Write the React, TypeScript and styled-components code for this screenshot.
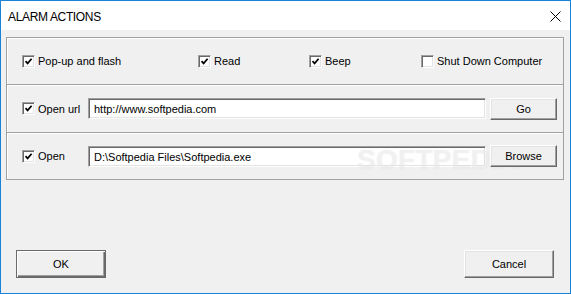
import React from 'react';
import styled, { createGlobalStyle } from 'styled-components';

const GlobalStyle = createGlobalStyle`
  html, body {
    margin: 0;
    padding: 0;
    background: #ffffff;
  }
  body {
    font-family: "Liberation Sans", Arial, sans-serif;
    font-size: 11px;
    color: #000;
  }
`;

const Window = styled.div`
  width: 571px;
  height: 294px;
  box-sizing: border-box;
  border: 1px solid #1883d7;
  display: flex;
  flex-direction: column;
  background: #f0f0f0;
  position: relative;
  overflow: hidden;
`;

const TitleBar = styled.div`
  height: 29px;
  flex: none;
  background: #ffffff;
  display: flex;
  align-items: center;
  justify-content: space-between;
  padding-left: 7px;
`;

const Title = styled.span`
  font-size: 12px;
  letter-spacing: -0.35px;
  color: #000;
  padding-top: 2px;
`;

const CloseButton = styled.div`
  width: 30px;
  height: 29px;
  display: flex;
  align-items: center;
  justify-content: center;
  padding-top: 2px;
`;

const Body = styled.div`
  flex: 1;
  display: flex;
  flex-direction: column;
  padding: 7px 6px 15px 5px;
`;

const GroupPanel = styled.div`
  border: 1px solid #a0a0a0;
  box-shadow: inset 1px 1px 0 #ffffff;
  display: flex;
  flex-direction: column;
`;

const Row = styled.div<{ $height: number; $last?: boolean }>`
  height: ${(p) => p.$height}px;
  display: flex;
  align-items: center;
  padding: 0 5px 0 15px;
  border-bottom: ${(p) => (p.$last ? 'none' : '1px solid #a0a0a0')};
  box-shadow: ${(p) => (p.$last ? 'none' : '0 1px 0 #ffffff')};
`;

const OptionGrid = styled.div`
  display: grid;
  grid-template-columns: 176px 111px 112px 1fr;
  align-items: center;
  width: 100%;
`;

const CheckLabel = styled.label<{ $width?: number }>`
  display: flex;
  align-items: center;
  gap: 3px;
  width: ${(p) => (p.$width ? `${p.$width}px` : 'auto')};
  flex: none;
  white-space: nowrap;
`;

const Box = styled.span`
  width: 13px;
  height: 13px;
  box-sizing: border-box;
  background: #ffffff;
  border-top: 1px solid #a0a0a0;
  border-left: 1px solid #a0a0a0;
  border-right: 1px solid #ffffff;
  border-bottom: 1px solid #ffffff;
  box-shadow: inset 1px 1px 0 #696969, inset -1px -1px 0 #e3e3e3;
  display: flex;
  align-items: center;
  justify-content: center;
`;

const TextField = styled.div`
  width: 398px;
  height: 21px;
  box-sizing: border-box;
  background: #ffffff;
  border-top: 1px solid #a0a0a0;
  border-left: 1px solid #a0a0a0;
  border-right: 1px solid #ffffff;
  border-bottom: 1px solid #ffffff;
  box-shadow: inset 1px 1px 0 #696969, inset -1px -1px 0 #e3e3e3;
  display: flex;
  align-items: center;
  padding-left: 5px;
  padding-top: 1px;
  flex: none;
`;

const PushButton = styled.div<{ $width: number; $height: number; $default?: boolean }>`
  width: ${(p) => p.$width}px;
  height: ${(p) => p.$height}px;
  box-sizing: border-box;
  background: #f0f0f0;
  border-top: 1px solid ${(p) => (p.$default ? '#696969' : '#ffffff')};
  border-left: 1px solid ${(p) => (p.$default ? '#696969' : '#ffffff')};
  border-right: 1px solid #696969;
  border-bottom: 1px solid #696969;
  box-shadow: ${(p) =>
    p.$default
      ? 'inset 1px 1px 0 #ffffff, inset -1px -1px 0 #696969, inset -2px -2px 0 #a0a0a0'
      : 'inset -1px -1px 0 #a0a0a0, inset 1px 1px 0 #e3e3e3'};
  display: flex;
  align-items: center;
  justify-content: center;
  flex: none;
  position: relative;
  z-index: 1;
`;

const Spacer = styled.div<{ $width: number }>`
  width: ${(p) => p.$width}px;
  flex: none;
`;

const Footer = styled.div`
  margin-top: auto;
  display: flex;
  justify-content: space-between;
  padding: 0 10px 0 10px;
`;

const Watermark = styled.div`
  position: absolute;
  left: 356px;
  top: 143px;
  font-family: "Liberation Sans", Arial, sans-serif;
  font-weight: bold;
  font-size: 28px;
  letter-spacing: 0.3px;
  color: rgba(255, 255, 255, 0.5);
  text-shadow: 0 0 1px rgba(160, 160, 160, 0.3);
  pointer-events: none;
`;

const Check = () => (
  <svg width="9" height="9" viewBox="0 0 9 9">
    <path d="M1.5 4.2 L3.6 6.4 L7.6 1.8" fill="none" stroke="#000" strokeWidth="1.7" />
  </svg>
);

const Checkbox = ({ checked, label, width }: { checked: boolean; label: string; width?: number }) => (
  <CheckLabel $width={width}>
    <Box>{checked && <Check />}</Box>
    {label}
  </CheckLabel>
);

export default function App() {
  return (
    <>
      <GlobalStyle />
      <Window>
        <TitleBar>
          <Title>ALARM ACTIONS</Title>
          <CloseButton>
            <svg width="11" height="11" viewBox="0 0 11 11">
              <path d="M0.5 0.5 L10.5 10.5 M10.5 0.5 L0.5 10.5" stroke="#000" strokeWidth="1" />
            </svg>
          </CloseButton>
        </TitleBar>
        <Body>
          <GroupPanel>
            <Row $height={46}>
              <OptionGrid>
                <Checkbox checked label="Pop-up and flash" />
                <Checkbox checked label="Read" />
                <Checkbox checked label="Beep" />
                <Checkbox checked={false} label="Shut Down Computer" />
              </OptionGrid>
            </Row>
            <Row $height={47}>
              <Checkbox checked label="Open url" width={66} />
              <TextField>http://www.softpedia.com</TextField>
              <Spacer $width={4} />
              <PushButton $width={67} $height={22}>Go</PushButton>
            </Row>
            <Row $height={46} $last>
              <Checkbox checked label="Open" width={66} />
              <TextField>D:\Softpedia Files\Softpedia.exe</TextField>
              <Spacer $width={4} />
              <PushButton $width={67} $height={22}>Browse</PushButton>
            </Row>
          </GroupPanel>
          <Footer>
            <PushButton $width={90} $height={28} $default>OK</PushButton>
            <PushButton $width={90} $height={28}>Cancel</PushButton>
          </Footer>
        </Body>
        <Watermark>SOFTPEDIA</Watermark>
      </Window>
    </>
  );
}
